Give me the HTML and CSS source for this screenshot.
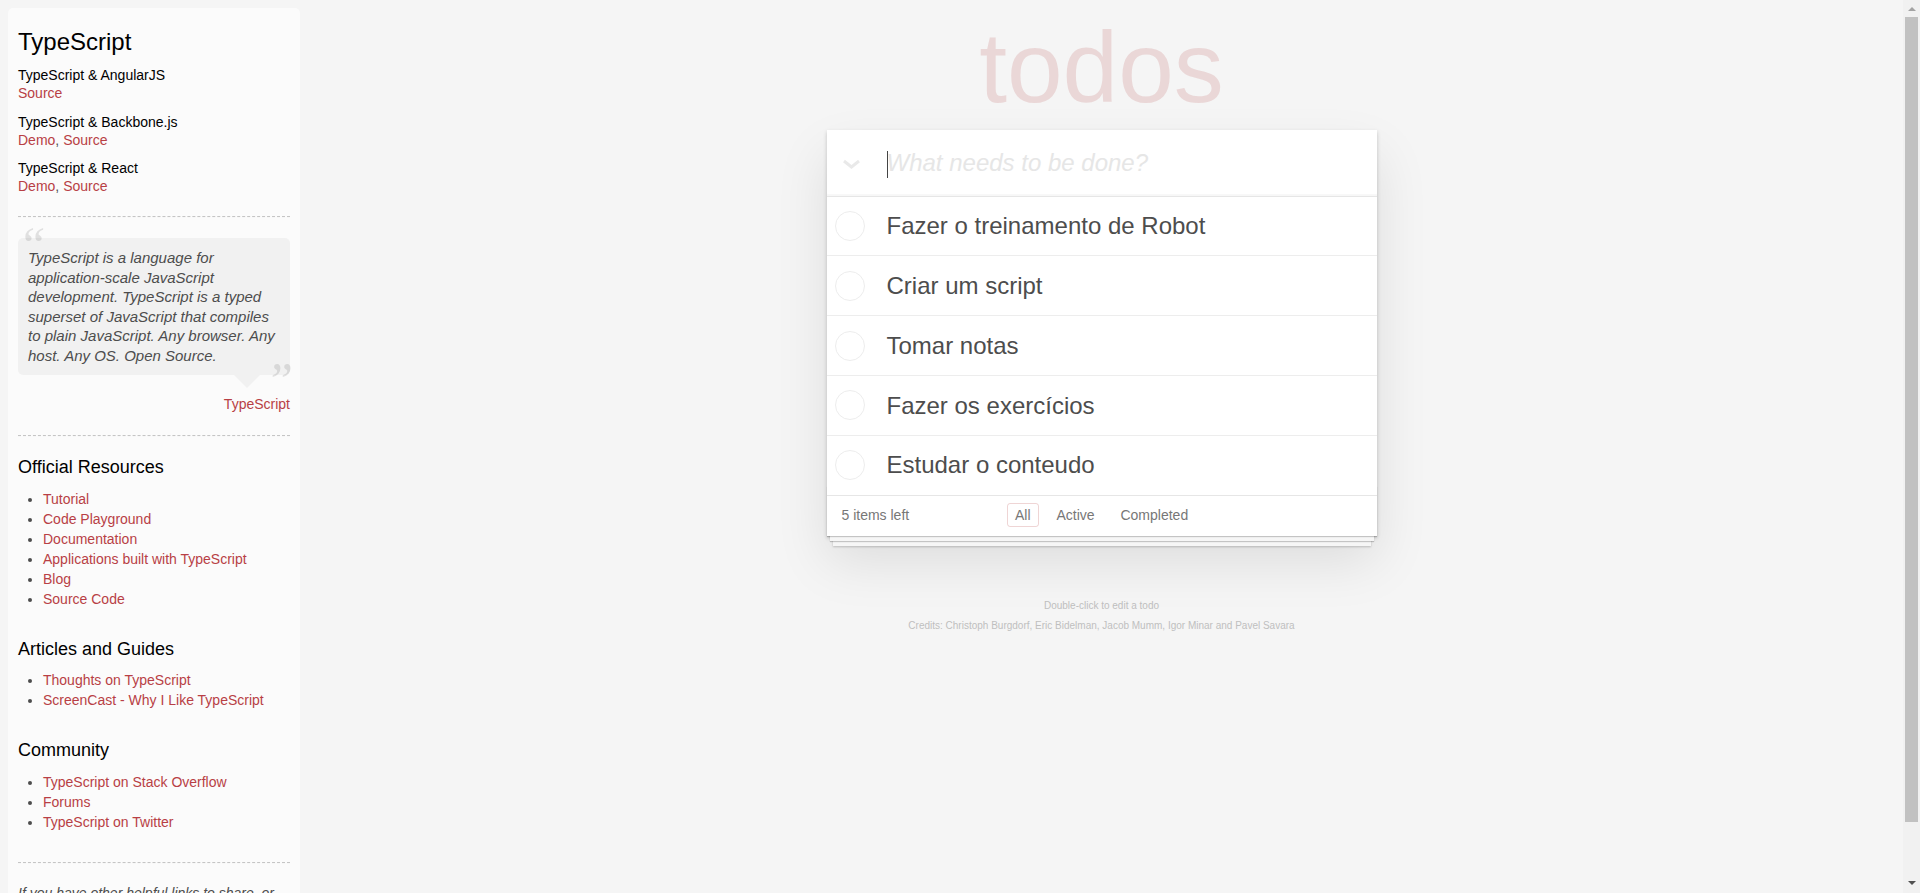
FILE: index.html
```html
<!DOCTYPE html>

<html lang="en">

<head>

    <meta charset="UTF-8">

    <title>TypeScript • TodoMVC</title>

    <link rel="stylesheet" href="styles.css">

</head>

<body>

    <div class="page">

        <aside class="learn">

            <h3>TypeScript</h3>

            <h5>TypeScript &amp; AngularJS</h5>
            <p class="source-links"><a href="#">Source</a></p>

            <h5>TypeScript &amp; Backbone.js</h5>
            <p class="source-links"><a href="#">Demo</a>, <a href="#">Source</a></p>

            <h5>TypeScript &amp; React</h5>
            <p class="source-links"><a href="#">Demo</a>, <a href="#">Source</a></p>

            <hr>

            <blockquote class="quote">
                <p>TypeScript is a language for application-scale JavaScript development. TypeScript is a typed superset of JavaScript that compiles to plain JavaScript. Any browser. Any host. Any OS. Open Source.</p>
                <footer><a href="#">TypeScript</a></footer>
            </blockquote>

            <hr>

            <h4>Official Resources</h4>
            <ul>
                <li><a href="#">Tutorial</a></li>
                <li><a href="#">Code Playground</a></li>
                <li><a href="#">Documentation</a></li>
                <li><a href="#">Applications built with TypeScript</a></li>
                <li><a href="#">Blog</a></li>
                <li><a href="#">Source Code</a></li>
            </ul>

            <h4>Articles and Guides</h4>
            <ul>
                <li><a href="#">Thoughts on TypeScript</a></li>
                <li><a href="#">ScreenCast - Why I Like TypeScript</a></li>
            </ul>

            <h4>Community</h4>
            <ul>
                <li><a href="#">TypeScript on Stack Overflow</a></li>
                <li><a href="#">Forums</a></li>
                <li><a href="#">TypeScript on Twitter</a></li>
            </ul>

            <hr>

            <p class="share"><em>If you have other helpful links to share, or find any of the links above no longer work, please <a href="#">let us know</a>.</em></p>

        </aside>

        <main class="content">

            <h1>todos</h1>

            <section class="todoapp">

                <header class="new-row">
                    <svg class="toggle-all" width="20" height="12" viewBox="0 0 20 12">
                        <polyline points="2,2 9.5,8 17,2" fill="none" stroke="#e9e9e9" stroke-width="3"/>
                    </svg>
                    <div class="new-wrap">
                        <span class="caret"></span>
                        <input class="new-todo" type="text" placeholder="What needs to be done?">
                    </div>
                </header>

                <ul class="todo-list">
                    <li><span class="check"></span>Fazer o treinamento de Robot</li>
                    <li><span class="check"></span>Criar um script</li>
                    <li><span class="check"></span>Tomar notas</li>
                    <li><span class="check"></span>Fazer os exercícios</li>
                    <li><span class="check"></span>Estudar o conteudo</li>
                </ul>

                <footer class="todo-footer">
                    <span class="todo-count">5 items left</span>
                    <div class="filters">
                        <a class="selected" href="#">All</a>
                        <a href="#">Active</a>
                        <a href="#">Completed</a>
                    </div>
                </footer>

            </section>

            <footer class="info">
                <p>Double-click to edit a todo</p>
                <p>Credits: Christoph Burgdorf, Eric Bidelman, Jacob Mumm, Igor Minar and Pavel Savara</p>
            </footer>

        </main>

        <div class="scrollbar">
            <span class="arrow-up"></span>
            <span class="thumb"></span>
            <span class="arrow-down"></span>
        </div>

    </div>

</body>

</html>
```

FILE: styles.css
```css
html, body {
    margin: 0;
    height: 100%;
    overflow: hidden;
}

body {
    font: 14px/1.4 "Liberation Sans", Arial, sans-serif;
    background-color: #f5f5f5;
    color: #4d4d4d;
}

.page {
    display: flex;
    height: 893px;
    overflow: hidden;
}

a {
    color: #b83f45;
    text-decoration: none;
}

/* Sidebar */
.learn {
    flex: none;
    box-sizing: border-box;
    width: 292px;
    height: 1200px;
    margin: 8px 0 0 8px;
    padding: 10px;
    background-color: rgba(255, 255, 255, 0.6);
    border-radius: 5px;
}

.learn h3 {
    margin: 7px 0 8px;
    font-size: 24px;
    font-weight: 400;
    line-height: 33px;
    color: #000;
}

.learn h4 {
    margin: 0 0 11.5px;
    font-size: 18px;
    font-weight: 400;
    line-height: 20px;
    color: #000;
}

.learn h5 {
    margin: 0;
    font-size: 14px;
    font-weight: 400;
    line-height: 18.25px;
    color: #000;
}

.source-links {
    margin: 0 0 10px;
    line-height: 18.25px;
}

.learn hr {
    margin: 20.5px 0 20px;
    border: 0;
    border-top: 1px dashed #c5c5c5;
    border-bottom: 1px dashed #f7f7f7;
}

.learn ul {
    margin: 0 0 30px;
    padding-left: 25px;
    line-height: 20px;
}

.share {
    margin: 0;
}

.quote {
    position: relative;
    margin: 20px 0 60px;
}

.quote p {
    position: relative;
    margin: 0;
    padding: 10px;
    font-size: 15px;
    font-style: italic;
    line-height: 1.3;
    background-color: rgba(0, 0, 0, 0.04);
    border-radius: 5px;
}

/* little tail under the bubble */
.quote p::after {
    content: "";
    position: absolute;
    top: 100%;
    right: 30px;
    width: 0;
    height: 0;
    border: 13px solid transparent;
    border-top-color: rgba(0, 0, 0, 0.04);
    border-bottom-width: 0;
}

.quote::before,
.quote::after {
    font-family: "Liberation Serif", serif;
    font-size: 50px;
    font-style: italic;
    line-height: 1;
    opacity: 0.15;
    position: absolute;
}

.quote::before {
    content: "“";
    top: -18px;
    left: 0;
}

.quote::after {
    content: "”";
    top: 117px;
    right: -3px;
}

.quote footer {
    position: absolute;
    top: 157px;
    right: 0;
}

/* Todo app */
.content {
    flex: 1;
    min-width: 0;
}

.content h1 {
    height: 130px;
    margin: 0;
    font-size: 100px;
    font-weight: 400;
    line-height: 135px;
    text-align: center;
    color: rgba(175, 47, 47, 0.15);
}

.todoapp {
    width: 550px;
    margin: 0 auto 40px;
    background: #fff;
    box-shadow: 0 2px 4px 0 rgba(0, 0, 0, 0.2), 0 25px 50px 0 rgba(0, 0, 0, 0.1);
    position: relative;
}

.new-row {
    display: flex;
    align-items: center;
    height: 65.6px;
    box-shadow: inset 0 -2px 1px rgba(0, 0, 0, 0.03);
}

.toggle-all {
    flex: none;
    margin: 4px 25px 0 15px;
}

.new-wrap {
    position: relative;
    flex: 1;
}

.caret {
    position: absolute;
    left: 0;
    top: 5px;
    width: 1px;
    height: 27px;
    background-color: #444;
}

.new-todo {
    display: block;
    box-sizing: border-box;
    width: 100%;
    padding: 0;
    border: 0;
    outline: 0;
    font: inherit;
    font-size: 24px;
    line-height: 34px;
    color: #4d4d4d;
}

.new-todo::placeholder {
    font-style: italic;
    color: #e6e6e6;
}

.todo-list {
    margin: 0;
    padding: 0;
    list-style: none;
    border-top: 1px solid #e6e6e6;
}

.todo-list li {
    display: flex;
    align-items: center;
    height: 58.8px;
    border-bottom: 1px solid #ededed;
    font-size: 24px;
    color: #4d4d4d;
}

.todo-list li:last-child {
    border-bottom: none;
}

.check {
    flex: none;
    box-sizing: border-box;
    width: 30px;
    height: 30px;
    margin: 0 22px 0 8px;
    border: 1px solid #ededed;
    border-radius: 50%;
}

.todo-footer {
    position: relative;
    display: flex;
    align-items: center;
    height: 40px;
    padding: 0 15px;
    border-top: 1px solid #e6e6e6;
    color: #777;
}

/* stacked sheets under the card */
.todo-footer::before {
    content: "";
    position: absolute;
    right: 0;
    bottom: 0;
    left: 0;
    height: 50px;
    overflow: hidden;
    box-shadow: 0 1px 1px rgba(0, 0, 0, 0.2), 0 8px 0 -3px #f6f6f6, 0 9px 1px -3px rgba(0, 0, 0, 0.2), 0 16px 0 -6px #f6f6f6, 0 17px 2px -6px rgba(0, 0, 0, 0.2);
}

.todo-count {
    width: 162.5px;
}

.filters {
    margin-bottom: 2px;
}

.filters a {
    display: inline-block;
    margin: 0 3px;
    padding: 3px 7px;
    border: 1px solid transparent;
    border-radius: 3px;
    line-height: 16px;
    color: inherit;
}

.filters a.selected {
    border-color: rgba(175, 47, 47, 0.2);
}

.info {
    margin-top: 65px;
    font-size: 10px;
    line-height: 1;
    text-align: center;
    color: #bfbfbf;
}

.info p {
    margin: 0 0 10px;
}

/* Scrollbar */
.scrollbar {
    flex: none;
    display: flex;
    flex-direction: column;
    align-items: center;
    width: 17px;
    background-color: #f1f1f1;
}

.thumb {
    flex: none;
    width: 13px;
    height: 805px;
    margin-top: 6px;
    background-color: #c1c1c1;
}

.arrow-up,
.arrow-down {
    flex: none;
    width: 0;
    height: 0;
    border-left: 4px solid transparent;
    border-right: 4px solid transparent;
}

.arrow-up {
    margin-top: 7px;
    border-bottom: 4px solid #a3a3a3;
}

.arrow-down {
    margin-top: 59px;
    border-top: 4px solid #505050;
}
```
